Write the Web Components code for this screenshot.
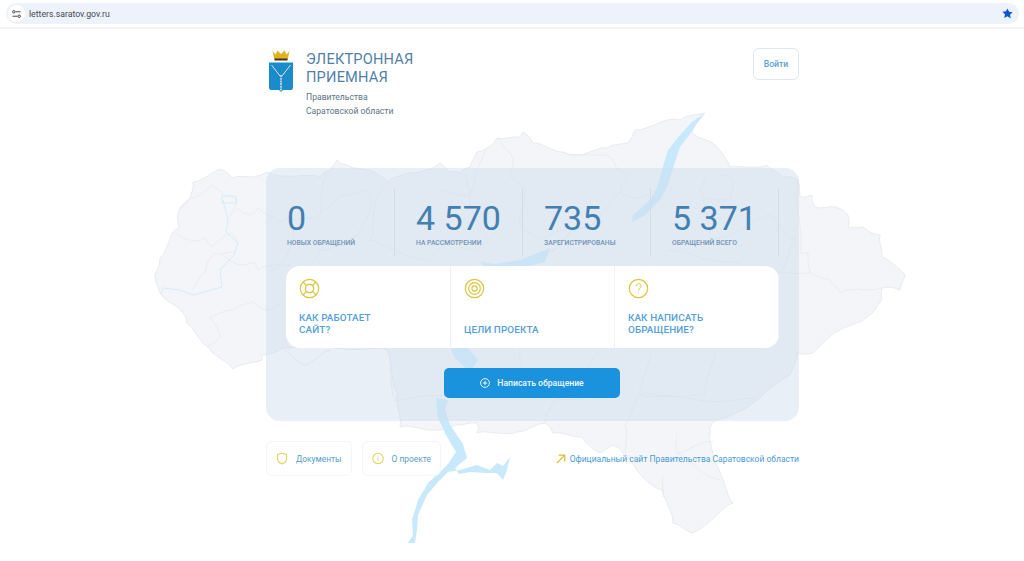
<!DOCTYPE html>
<html lang="ru">
<head>
<meta charset="utf-8">
<title>Электронная приемная</title>
<style>
  html, body { margin: 0; height: 100%; background: #fff; overflow: hidden; }
  body { font-family: Roboto, "Liberation Sans", sans-serif; }
</style>
</head>
<body>
<app-page>
  <browser-bar slot="bar" url="letters.saratov.gov.ru"></browser-bar>
  <map-backdrop slot="map"></map-backdrop>
  <site-header></site-header>
  <stats-card>
    <stat-item slot="stats" value="0" label="Новых обращений"></stat-item>
    <stat-item slot="stats" value="4 570" label="На рассмотрении"></stat-item>
    <stat-item slot="stats" value="735" label="Зарегистрированы"></stat-item>
    <stat-item slot="stats" value="5 371" label="Обращений всего"></stat-item>
    <info-cell slot="cells" icon="buoy">Как работает<br>сайт?</info-cell>
    <info-cell slot="cells" icon="target">Цели проекта</info-cell>
    <info-cell slot="cells" icon="question">Как написать<br>обращение?</info-cell>
    <action-button slot="action">Написать обращение</action-button>
  </stats-card>
  <footer-links></footer-links>
</app-page>

<script>
const icons = {
  buoy: `<svg width="21" height="21" viewBox="0 0 21 21" fill="none" stroke="#dcc53f" stroke-width="1.2"><circle cx="10.5" cy="10.5" r="9.2"/><circle cx="10.5" cy="10.5" r="4.2"/><path d="M4 4l3.5 3.5M17 4l-3.5 3.5M4 17l3.5-3.5M17 17l-3.5-3.5"/></svg>`,
  target: `<svg width="21" height="21" viewBox="0 0 21 21" fill="none" stroke="#dcc53f" stroke-width="1.2"><circle cx="10.5" cy="10.5" r="9.2"/><circle cx="10.5" cy="10.5" r="5.8"/><circle cx="10.5" cy="10.5" r="2.6"/></svg>`,
  question: `<svg width="21" height="21" viewBox="0 0 21 21" fill="none" stroke="#dcc53f" stroke-width="1.2"><circle cx="10.5" cy="10.5" r="9.2"/><path d="M7.9 8.2a2.6 2.6 0 1 1 4 2.2c-.9.6-1.4 1.1-1.4 2.2" stroke-width="1"/><circle cx="10.5" cy="15" r=".5" fill="#dcc53f" stroke="none"/></svg>`,
  shield: `<svg width="12" height="13" viewBox="0 0 12 13" fill="none" stroke="#e3d05c" stroke-width="1.1"><path d="M6 1l4.5 1.600v4.200c0 2.600-1.900 4.300-4.500 5.200C3.400 11.100 1.500 9.400 1.500 6.800V2.600z"/></svg>`,
  info: `<svg width="12" height="13" viewBox="0 0 13 13" fill="none" stroke="#e3d05c" stroke-width="1.1"><circle cx="6.500" cy="6.500" r="5.700"/><path d="M6.500 6v3.300M6.500 3.600v1"/></svg>`,
  arrow: `<svg width="10" height="10" viewBox="0 0 10 10" fill="none" stroke="#d9bf3a" stroke-width="1.2"><path d="M1 9L8.800 1.200M2.500 1.200h6.300v6.300"/></svg>`
};

class AppPage extends HTMLElement {
  constructor() {
    super();
    this.attachShadow({ mode: 'open' });
    this.shadowRoot.innerHTML = `
      <style>
        :host { display: block; height: 561px; position: relative; overflow: hidden; background: #fff; }
        .content {
          position: relative;
          width: 533px;
          margin-left: 266px;
          display: flex;
          flex-direction: column;
        }
      </style>
      <slot name="bar"></slot>
      <slot name="map"></slot>
      <div class="content"><slot></slot></div>
    `;
  }
}

class BrowserBar extends HTMLElement {
  constructor() {
    super();
    this.attachShadow({ mode: 'open' });
  }
  connectedCallback() {
    const url = this.getAttribute('url') || '';
    this.shadowRoot.innerHTML = `
      <style>
        :host { display: block; padding-top: 3px; box-sizing: border-box; border-bottom: 2px solid #f2f3f5; height: 29px; background: #fff; }
        .pill {
          margin: 0 5px 0 6px;
          height: 21px;
          border-radius: 11px;
          background: #edf2fb;
          display: flex;
          align-items: center;
          padding-left: 2px;
          padding-right: 6px;
        }
        .tune {
          width: 17px; height: 17px; border-radius: 50%; background: #fff;
          display: flex; align-items: center; justify-content: center;
        }
        .url { margin-left: 4px; flex: 1; font: 8.700px Roboto, sans-serif; color: #474a4f; }
      </style>
      <div class="pill">
        <span class="tune">
          <svg width="9" height="8" viewBox="0 0 10 9" fill="none" stroke="#444" stroke-width="1.100"><path d="M4 2h5.500M.5 7h5.500"/><circle cx="2" cy="2" r="1.400"/><circle cx="8" cy="7" r="1.400"/></svg>
        </span>
        <span class="url">${url}</span>
        <svg width="11" height="11" viewBox="0 0 24 24" fill="#0b57d0"><path d="M12 1l3.400 7.300 7.900 1-5.800 5.500 1.500 7.900L12 18l-7 3.700 1.500-7.900L.7 8.300l7.900-1z"/></svg>
      </div>
    `;
  }
}

// borders on the map are jagged, so break straight runs into small steps
function roughen(d) {
  let seed = 0;
  return d.split('M').filter(part => part.trim() !== '').map(part => {
    const closed = /Z/.test(part);
    const nums = part.replace(/[LZ]/g, ' ').trim().split(/\s+/).map(Number);
    const pts = [];
    for (let i = 0; i < nums.length; i += 2) pts.push([nums[i], nums[i + 1]]);
    if (closed) pts.push(pts[0]);
    const out = [pts[0].join(' ')];
    for (let i = 1; i < pts.length; i++) {
      const [x0, y0] = pts[i - 1];
      const [x1, y1] = pts[i];
      const len = Math.hypot(x1 - x0, y1 - y0);
      const steps = Math.max(1, Math.floor(len / 5));
      for (let s = 1; s <= steps; s++) {
        const t = s / steps;
        seed++;
        const off = s === steps ? 0 : Math.sin(seed * 12.9898) * 1.5;
        const x = x0 + (x1 - x0) * t - (y1 - y0) / len * off;
        const y = y0 + (y1 - y0) * t + (x1 - x0) / len * off;
        out.push(x.toFixed(1) + ' ' + y.toFixed(1));
      }
    }
    return 'M' + out.join(' L') + (closed ? ' Z' : '');
  }).join(' ');
}

const mapOutline = 'M155 275 L160 258 L173 232 L179 227 L179 210 L190 198 L193 182 L212 173 L220 169 L232 178 L253 177 L267 172 L290 176 L320 177 L330 170 L337 160 L347 165 L370 170 L387 182 L407 173 L425 170 L440 163 L450 172 L460 173 L470 167 L477 152 L487 148 L497 138 L520 137 L523 132 L533 143 L563 152 L577 155 L607 148 L628 143 L635 130 L667 120 L680 120 L705 113 L692 133 L713 143 L730 167 L767 165 L783 177 L798 180 L800 197 L812 195 L815 207 L835 207 L848 215 L848 228 L863 227 L880 235 L882 257 L905 275 L900 290 L882 288 L882 300 L867 317 L840 330 L813 353 L797 353 L790 375 L757 400 L725 418 L713 422 L710 433 L713 460 L733 503 L692 533 L673 523 L662 490 L643 477 L623 453 L613 445 L600 453 L582 437 L553 433 L545 423 L517 432 L477 433 L477 423 L455 425 L433 430 L400 427 L397 393 L387 350 L330 347 L283 348 L262 355 L262 360 L233 369 L208 347 L187 323 L183 313 L163 297 Z';

const mapBorders = [
  'M179 210 L190 198 L205 191 L212 185 L225 196 L237 200 L230 215 L238 208 L250 215 L258 208 L267 215 L280 222 L290 218 L295 240 L285 262 L270 272',
  'M173 232 L190 240 L205 238 L212 247 L232 233 L238 243 L235 252 L222 254 L240 265 L255 263 L258 270 L275 265 L290 265',
  'M222 254 L213 254 L205 272 L192 290',
  'M207 347 L220 337 L210 317 L233 310 L253 302 L267 310 L282 302',
  'M290 220 L320 215 L325 178 M320 215 L340 195 L368 190 L370 210 L358 235 L345 245 L320 250 L305 270',
  'M387 182 L375 205 L370 240 L395 250 L430 262 L450 240 L470 250 L490 240 L470 205 L465 175',
  'M440 190 L470 195 L487 148 M510 177 L513 160 L497 138 M510 177 L525 190 L520 225 L540 240 L565 230 L590 225 L620 193 L628 175 L617 170 L610 157 L563 152',
  'M620 193 L637 198 L655 190 M707 175 L700 190 L703 200 L730 200 L732 177 L720 175 M703 200 L710 240 L740 230 L770 215 L795 240 L780 272',
  'M798 180 L800 253 L808 253 L810 272 L830 280 L840 293 L853 290 L863 290 L882 288',
  'M780 272 L810 272 M660 260 L668 250 L700 258 L740 262',
  'M283 348 L305 365 L330 350 M387 350 L395 400 L450 395 M520 348 L525 380 L580 375 L600 350 M650 350 L640 395 L700 400 L757 400 M715 350 L705 395 L640 395 L625 425 L625 453',
  'M677 433 L677 453 L697 445 L713 442 M677 453 L700 470 L720 480 M663 477 L663 497 M545 423 L555 400 L600 395'
];

class MapBackdrop extends HTMLElement {
  constructor() {
    super();
    this.attachShadow({ mode: 'open' });
    this.shadowRoot.innerHTML = `
      <style>
        :host { display: block; position: absolute; left: 0; top: 0; width: 1024px; height: 561px; }
        svg { display: block; }
        .land { fill: #f3f5f8; stroke: #e8ebef; stroke-width: 1; stroke-linejoin: round; }
        .line { fill: none; stroke: #e8ebef; stroke-width: .9; stroke-linejoin: round; }
        .water { fill: #c8e9fc; }
        .stream { fill: none; stroke: #d4ecfa; stroke-width: 1; }
      </style>
      <svg width="1024" height="561" viewBox="0 0 1024 561">
        <path class="land" d="${roughen(mapOutline)}"/>
        ${mapBorders.map(d => `<path class="line" d="${roughen(d)}"/>`).join('')}
        <path class="stream" d="M223 200 L228 220 L226 232 L238 243 L234 255 L220 270 L222 287 L193 295 L180 290 L163 288 L161 294 M222 196 L236 196 L236 203 L222 203 Z"/>
        <path class="stream" d="M600 222 L570 232 L555 250 L520 262"/>
        <path class="water" d="M705 113 L696 124 L690 134 L680 147 L674 165 L668 185 L660 200 L645 215 L632 222 L633 215 L650 200 L657 188 L662 170 L668 150 L680 135 L692 122 Z"/>
        <path class="water" d="M550 248 L520 260 L495 264 L480 262 L490 272 L520 268 L545 262 Z"/>
        <path class="water" d="M447 340 L455 358 L470 372 L478 360 L465 345 Z"/>
        <path class="water" d="M436 398 L438 418 L446 435 L456 452 L448 464 L440 472 L428 483 L418 500 L412 520 L413 535 L408 543 L415 543 L417 530 L418 515 L427 495 L438 482 L448 472 L460 470 L477 465 L490 470 L497 463 L503 466 L510 457 L507 470 L503 480 L497 473 L485 473 L470 472 L459 474 L455 468 L467 458 L463 444 L450 425 L445 410 L448 400 Z"/>
      </svg>
    `;
  }
}

class SiteHeader extends HTMLElement {
  constructor() {
    super();
    this.attachShadow({ mode: 'open' });
    this.shadowRoot.innerHTML = `
      <style>
        :host { display: flex; justify-content: space-between; align-items: flex-start; height: 139px; padding-top: 19px; box-sizing: border-box; }
        .brand { display: flex; }
        .crest { margin: 2px 12px 0 2px; display: block; }
        h1 { margin: 2px 0 0; font: 400 14.600px/18px Roboto, sans-serif; color: #4f7fa8; letter-spacing: .2px; }
        p { margin: 4px 0 0; font: 400 8.600px/14px Roboto, sans-serif; color: #5c7488; }
        button {
          width: 46px; height: 32px; box-sizing: border-box;
          background: #fff; border: 1px solid #dce7f0; border-radius: 6px;
          font: 500 8.700px Roboto, sans-serif; color: #5d9fcf; padding: 0;
        }
      </style>
      <div class="brand">
        <svg class="crest" width="26" height="44" viewBox="0 0 26 44">
          <path d="M4.500 1l3 3.500L9.500.5 13 4l3.500-3.500 2 4L21.500 1l-2 9H6.500z" fill="#e2b31c"/>
          <rect x="6.500" y="8.500" width="13" height="2" fill="#3a3420"/>
          <path d="M1 12.500h24v24.500c0 2.500-1 3-3 3h-7l-2 2-2-2H4c-2 0-3-.5-3-3z" fill="#1a8ccb"/>
          <path d="M3.500 15L12 26M22.500 15L14 26" stroke="#d8e3e8" stroke-width="1" fill="none"/>
          <path d="M13 25v16" stroke="#c6d4da" stroke-width="1.800" stroke-dasharray="2 .7"/>
        </svg>
        <div>
          <h1>ЭЛЕКТРОННАЯ<br>ПРИЕМНАЯ</h1>
          <p>Правительства<br>Саратовской области</p>
        </div>
      </div>
      <button>Войти</button>
    `;
  }
}

class StatsCard extends HTMLElement {
  constructor() {
    super();
    this.attachShadow({ mode: 'open' });
    this.shadowRoot.innerHTML = `
      <style>
        :host {
          display: block; height: 253px; box-sizing: border-box;
          padding: 20px 20px 0;
          border-radius: 14px;
          background: rgba(205, 220, 238, .45);
        }
        .stats { display: grid; grid-template-columns: 109px 128px 128px 128px; height: 68px; }
        .cells {
          display: grid; grid-template-columns: 165px 164px 164px;
          height: 82px; margin-top: 10px;
          background: #fff; border-radius: 14px; overflow: hidden;
        }
        .action { display: flex; justify-content: center; margin: 20px 1px 0 0; }
      </style>
      <div class="stats"><slot name="stats"></slot></div>
      <div class="cells"><slot name="cells"></slot></div>
      <div class="action"><slot name="action"></slot></div>
    `;
  }
}

class StatItem extends HTMLElement {
  constructor() {
    super();
    this.attachShadow({ mode: 'open' });
  }
  connectedCallback() {
    this.shadowRoot.innerHTML = `
      <style>
        :host { display: block; padding: 10px 0 0 1px; box-sizing: border-box; border-right: 1px solid #cfdce9; }
        :host(:last-child) { border-right: 0; }
        :host(:not(:first-child)) { padding-left: 21px; }
        .value { font: 400 34px/40px Roboto, sans-serif; color: #4280b1; white-space: nowrap; }
        .label { font: 500 6.800px/10px Roboto, sans-serif; color: #6f94b6; text-transform: uppercase; margin-top: 0; white-space: nowrap; }
      </style>
      <div class="value">${this.getAttribute('value')}</div>
      <div class="label">${this.getAttribute('label')}</div>
    `;
  }
}

class InfoCell extends HTMLElement {
  constructor() {
    super();
    this.attachShadow({ mode: 'open' });
  }
  connectedCallback() {
    this.shadowRoot.innerHTML = `
      <style>
        :host {
          display: flex; flex-direction: column; justify-content: space-between;
          box-sizing: border-box; height: 82px; padding: 12px 13px 12px;
          border-right: 1px solid #eef2f6;
        }
        :host(:last-child) { border-right: 0; }
        svg { display: block; }
        .text {
          font: 500 9.900px/12px Roboto, sans-serif; color: #55a0d8;
          text-transform: uppercase; letter-spacing: .1px;
        }
      </style>
      ${icons[this.getAttribute('icon')]}
      <div class="text"><slot></slot></div>
    `;
  }
}

class ActionButton extends HTMLElement {
  constructor() {
    super();
    this.attachShadow({ mode: 'open' });
    this.shadowRoot.innerHTML = `
      <style>
        :host {
          display: flex; align-items: center; justify-content: center; gap: 7px;
          width: 176px; height: 30px; border-radius: 5px;
          background: #1a92dd; color: #f2f8fd;
          font: 500 8.600px Roboto, sans-serif;
        }
        svg { display: block; }
      </style>
      <svg width="10" height="10" viewBox="0 0 10 10" fill="none" stroke="#fff" stroke-width=".9"><circle cx="5" cy="5" r="4.400"/><path d="M5 2.800v4.400M2.800 5h4.400"/></svg>
      <span><slot></slot></span>
    `;
  }
}

class LinkChip extends HTMLElement {
  constructor() {
    super();
    this.attachShadow({ mode: 'open' });
  }
  connectedCallback() {
    this.shadowRoot.innerHTML = `
      <style>
        :host {
          display: flex; align-items: center; gap: 8px; height: 35px;
          box-sizing: border-box; padding: 0 9px;
          background: #fff; border: 1px solid #f3f5f8; border-radius: 6px;
          font: 400 8.400px Roboto, sans-serif; color: #5b9dcb;
        }
        svg { display: block; }
      </style>
      ${icons[this.getAttribute('icon')]}
      <span><slot></slot></span>
    `;
  }
}

class FooterLinks extends HTMLElement {
  constructor() {
    super();
    this.attachShadow({ mode: 'open' });
    this.shadowRoot.innerHTML = `
      <style>
        :host { display: flex; align-items: center; gap: 10px; margin-top: 20px; }
        .official {
          margin-left: auto; display: flex; align-items: center; gap: 4px;
          font: 400 8.500px Roboto, sans-serif; color: #4b9bd5; white-space: nowrap;
        }
      </style>
      <link-chip icon="shield">Документы</link-chip>
      <link-chip icon="info">О проекте</link-chip>
      <div class="official">${icons.arrow}<span>Официальный сайт Правительства Саратовской области</span></div>
    `;
  }
}

customElements.define('app-page', AppPage);
customElements.define('browser-bar', BrowserBar);
customElements.define('map-backdrop', MapBackdrop);
customElements.define('site-header', SiteHeader);
customElements.define('stats-card', StatsCard);
customElements.define('stat-item', StatItem);
customElements.define('info-cell', InfoCell);
customElements.define('action-button', ActionButton);
customElements.define('link-chip', LinkChip);
customElements.define('footer-links', FooterLinks);
</script>
</body>
</html>
